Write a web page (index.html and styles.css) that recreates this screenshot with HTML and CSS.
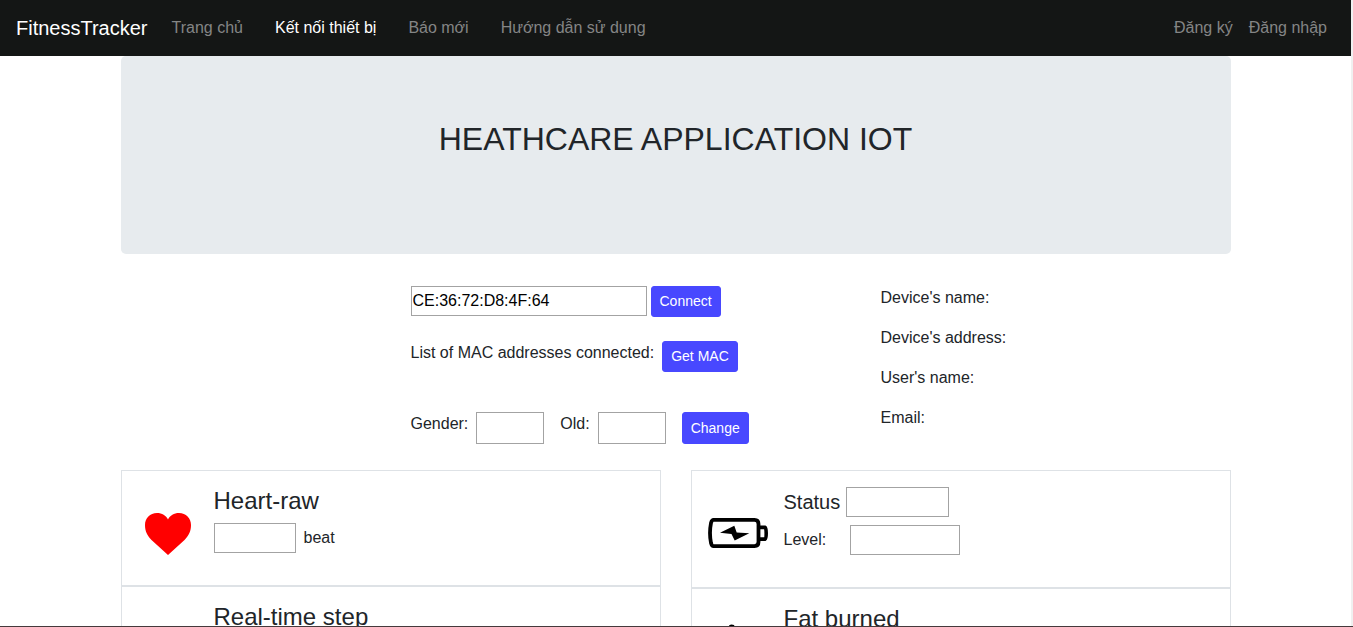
FILE: index.html
```html
<!DOCTYPE html>
<html lang="vi">
<head>
<meta charset="utf-8">
<title>FitnessTracker</title>
<link rel="stylesheet" href="styles.css">
</head>
<body>
<div class="page">
  <nav class="navbar">
    <a class="brand">FitnessTracker</a>
    <a class="nav-link">Trang chủ</a>
    <a class="nav-link active">Kết nối thiết bị</a>
    <a class="nav-link">Báo mới</a>
    <a class="nav-link">Hướng dẫn sử dụng</a>
    <div class="account"><a>Đăng ký</a><a>Đăng nhập</a></div>
  </nav>
  <main class="container">
    <header class="jumbotron"><h2>HEATHCARE APPLICATION IOT</h2></header>
    <section class="device">
      <form class="controls">
        <div class="row connect">
          <input class="field mac" type="text" value="CE:36:72:D8:4F:64">
          <button class="btn" type="button">Connect</button>
        </div>
        <div class="row list">
          <span>List of MAC addresses connected:</span>
          <button class="btn" type="button">Get MAC</button>
        </div>
        <div class="row profile">
          <label>Gender:</label><input class="field small" type="text">
          <label class="old">Old:</label><input class="field small" type="text">
          <button class="btn change" type="button">Change</button>
        </div>
      </form>
      <div class="info">
        <p>Device's name:</p>
        <p>Device's address:</p>
        <p>User's name:</p>
        <p>Email:</p>
      </div>
    </section>
    <section class="stats">
      <div class="column">
        <article class="card heart-card">
          <div class="icon">
            <svg class="heart" viewBox="0 0 46 42"><path fill="#f00" d="M23 42L6.5 27C2 22.5 0 18 0 12C0 5 5 0 12 0C17 0 21 2.5 23 6.5C25 2.5 29 0 34 0C41 0 46 5 46 12C46 18 44 22.5 39.5 27Z"/></svg>
          </div>
          <div class="content">
            <h4>Heart-raw</h4>
            <div class="reading"><input class="field beat" type="text"><span>beat</span></div>
          </div>
        </article>
        <article class="card">
          <div class="icon"></div>
          <div class="content"><h4>Real-time step</h4></div>
        </article>
      </div>
      <div class="column">
        <article class="card battery-card">
          <div class="icon">
            <svg class="battery" viewBox="0 0 60 30">
              <path fill="none" stroke="#000" stroke-width="3.8" d="M5.5 1.9H46.5Q50.5 2 50.5 6V24Q50.5 28 46.5 28.1H5.5Q3.8 28.1 3 25Q1 15 3 5Q3.8 1.9 5.5 1.9Z"/>
              <path fill="none" stroke="#000" stroke-width="3.6" d="M51 9.4H57Q58.2 10 58.2 15.2T57 21.1H51"/>
              <path d="M12 14.7L26.3 7.8L28.7 14.5L41.3 15.3L26.7 22.5L23.5 16Z"/>
            </svg>
          </div>
          <div class="content">
            <div class="status"><h5>Status</h5><input class="field status-field" type="text"></div>
            <div class="level"><label>Level:</label><input class="field level-field" type="text"></div>
          </div>
        </article>
        <article class="card fat-card">
          <div class="icon"><svg class="flame" viewBox="0 0 30 40"><path d="M12.5 1Q14.5 0 17 1C18 3 17 4 20 7C31 19 28 40 15 40C2 40 -1 25 8 15C12 10 11 3 12.5 1Z"/></svg></div>
          <div class="content"><h4>Fat burned</h4></div>
        </article>
      </div>
    </section>
  </main>
</div>
</body>
</html>
```
FILE: styles.css
```css
* { box-sizing: border-box; }
body {
  margin: 0;
  height: 627px;
  overflow: hidden;
  background: #f0f0f0;
  border-bottom: 1px solid #453a3c;
  font: 16px/24px "Liberation Sans", Arial, sans-serif;
  color: #212529;
}
h2, h4, h5, p { margin: 0; font-weight: 400; }
.page { width: 1351px; height: 626px; overflow: hidden; background: #fff; }
.navbar {
  display: flex;
  align-items: center;
  height: 56px;
  padding: 0 24px 0 16px;
  background: #141615;
  color: #848585;
}
.brand { margin-right: 16px; font-size: 20px; line-height: 30px; color: #fff; }
.nav-link { padding: 0 8px; margin-right: 16px; }
.nav-link.active { color: #fff; }
.account { display: flex; gap: 16px; margin-left: auto; }
.container { width: 1110px; margin: 0 auto; }
.jumbotron {
  height: 198px;
  padding: 64px 32px;
  border-radius: 5px;
  background: #e7ebee;
  text-align: center;
}
.jumbotron h2 { font-size: 32px; line-height: 38.4px; }
.device {
  display: grid;
  grid-template-columns: 470px 1fr;
  height: 216px;
  padding: 32px 0 0 290px;
}
.row { display: flex; align-items: flex-start; }
.connect { gap: 4px; height: 55px; }
.list { gap: 8px; height: 71px; }
.field {
  display: block;
  height: 30px;
  margin: 0;
  padding: 1px;
  border: 1px solid #a3a3a3;
  border-radius: 0;
  background: #fff;
  font: inherit;
  color: #000;
}
.mac { width: 236px; }
.btn {
  height: 31px;
  margin: 0;
  padding: 4px 8px;
  border: 1px solid #4848ff;
  border-radius: 3px;
  background: #4848ff;
  font: 14px/21px "Liberation Sans", Arial, sans-serif;
  color: #fff;
}
.small { width: 68px; height: 32px; margin-left: 8px; }
.old { margin-left: 16px; }
.change { height: 32px; margin-left: 16px; }
.info { display: grid; gap: 16px; align-content: start; }
.stats { display: grid; grid-template-columns: 1fr 1fr; gap: 30px; }
.card {
  display: grid;
  grid-template-columns: 77px 1fr;
  height: 116px;
  padding: 16px 15px 0;
  border: 1px solid #dee2e6;
}
.battery-card { height: 118px; }
.card h4 { margin-bottom: 8px; font-size: 24px; line-height: 28.8px; }
.card h5 { font-size: 20px; line-height: 24px; }
.heart { display: block; width: 46px; height: 42px; margin: 26px 0 0 8px; }
.battery { display: block; width: 60px; height: 30px; margin: 31px 0 0 1px; }
.flame { display: block; width: 30px; height: 40px; margin: 19px 0 0 10px; }
.reading { display: flex; align-items: center; gap: 8px; height: 29px; }
.beat { width: 82px; }
.status { display: flex; align-items: center; gap: 6px; height: 30px; margin-bottom: 8px; }
.status-field { width: 103px; }
.level { display: flex; align-items: center; height: 30px; }
.level label { width: 66px; }
.level-field { width: 110px; }
```
